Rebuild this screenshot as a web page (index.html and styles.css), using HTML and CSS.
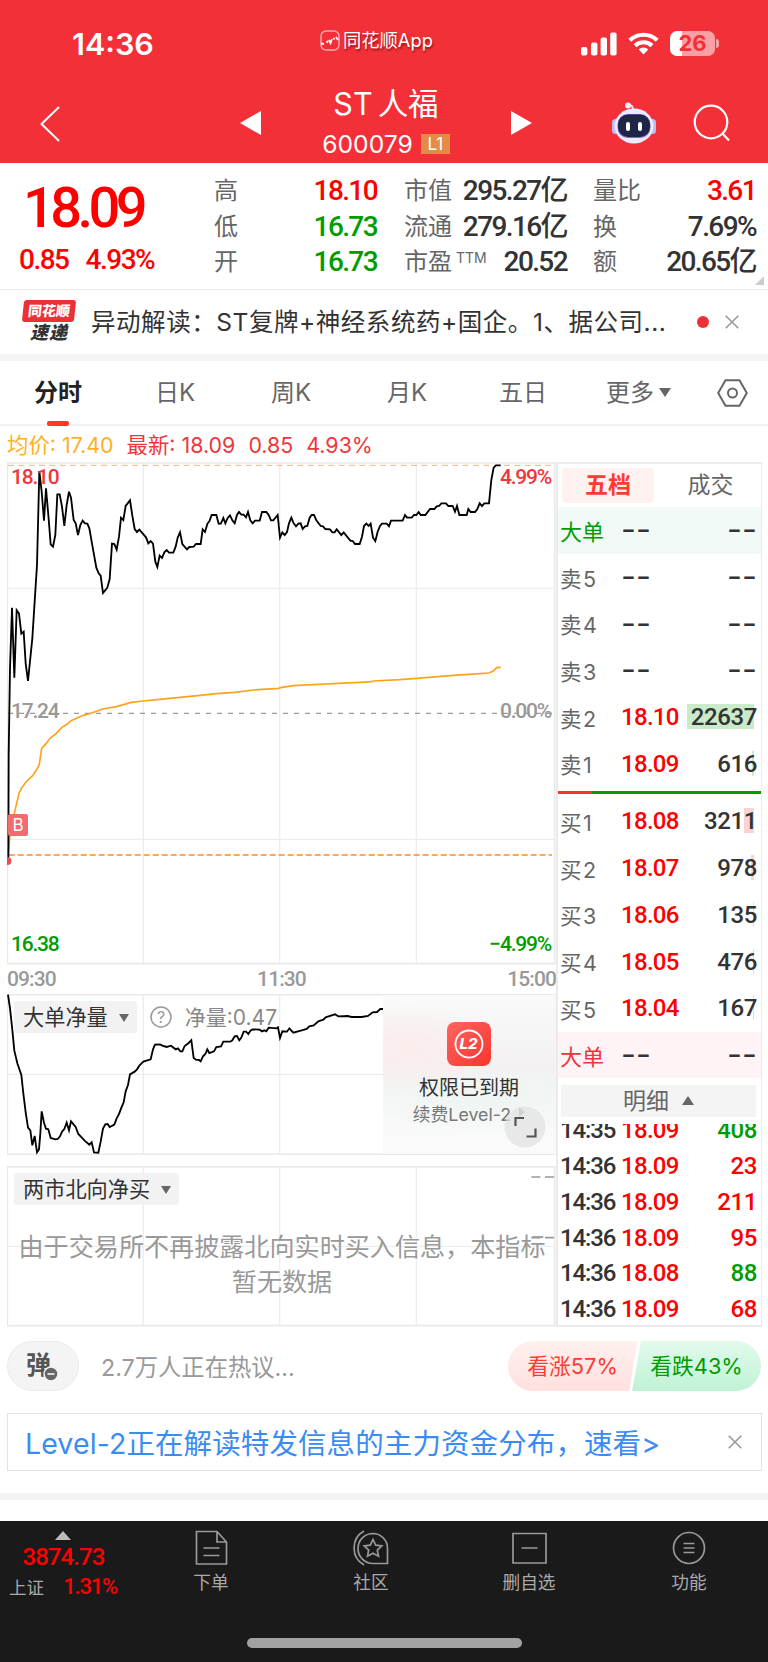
FILE: index.html
```html
<!DOCTYPE html>
<html lang="zh-CN">
<head>
  <meta charset="UTF-8" />
  <meta name="viewport" content="width=device-width, initial-scale=1.0"/>
  <title>ST人福 600079</title>
  <link rel="stylesheet" href="styles.css">
</head>
<body>

  <header>
    <div class="status">
      <span class="time">14:36</span>
      <span class="brand">
        <svg width="20" height="21" viewBox="0 0 20 21"><rect x="1" y="1" width="18" height="19" rx="5" fill="none" stroke="#fff" stroke-opacity=".6" stroke-width="1.4"/><path d="M1 13.500l3 .5M6.500 12.500l1.500-1.500M9 10l1.500 3 1.500-4M13.500 9.500l1-1.500M16 7l2 3" fill="none" stroke="#fff" stroke-width="1.800"/></svg>
        同花顺App
      </span>
      <span class="signals">
        <svg width="37" height="24" viewBox="0 0 37 24" fill="#fff"><rect x="0" y="15" width="6.4" height="8.5" rx="2"/><rect x="10" y="10.5" width="6.4" height="13" rx="2"/><rect x="19.6" y="5.5" width="6.4" height="18" rx="2"/><rect x="29.2" y="0.5" width="6.4" height="23" rx="2"/></svg>
        <svg class="wifi" width="31" height="23" viewBox="0 0 31 23" fill="none" stroke="#fff" stroke-width="4.2"><path d="M1.8 8.2a20 20 0 0 1 27.4 0"/><path d="M7 13.6a12.4 12.4 0 0 1 17 0"/><path d="M15.5 22.5l-4.8-5a6.8 6.8 0 0 1 9.6 0z" fill="#fff" stroke="none"/></svg>
        <span class="battery">26</span>
      </span>
    </div>
    <div class="titlebar">
      <svg class="back" width="20" height="36" viewBox="0 0 20 36"><path d="M19 1L1.5 18 19 35" fill="none" stroke="#fff" stroke-width="2"/></svg>
      <svg class="prev" width="21" height="24" viewBox="0 0 21 24"><path d="M21 0v24L0 12z" fill="#fff"/></svg>
      <div class="stock">
        <h1><span>ST</span>人福</h1>
        <p>600079<span class="lv">L1</span></p>
      </div>
      <svg class="next" width="21" height="24" viewBox="0 0 21 24"><path d="M0 0l21 12L0 24z" fill="#fff"/></svg>
      <svg class="robot" width="46" height="42" viewBox="0 0 46 42">
        <path d="M22 8q0-5-4-5" fill="none" stroke="#f3dfe8" stroke-width="2"/>
        <circle cx="17" cy="3.5" r="3" fill="#f4ecf4"/>
        <rect x="1" y="17" width="7" height="15" rx="3.5" fill="#b9bdf0"/><rect x="38" y="17" width="7" height="15" rx="3.5" fill="#b9bdf0"/>
        <ellipse cx="23" cy="24" rx="19.5" ry="17.5" fill="#e9edfb"/>
        <rect x="6.500" y="12" width="33" height="24" rx="10.500" fill="#8a5fe0"/>
        <rect x="7" y="12.500" width="32" height="22.500" rx="10" fill="#1e2648"/>
        <rect x="15" y="20" width="4" height="9" rx="2" fill="#fff"/><rect x="27" y="20" width="4" height="9" rx="2" fill="#fff"/>
      </svg>
      <svg class="search" width="38" height="38" viewBox="0 0 38 38" fill="none" stroke="#fff" stroke-width="2.200"><circle cx="18" cy="18" r="16.300"/><path d="M29.500 29.500l6.500 7"/></svg>
    </div>
  </header>

  <section class="quote">
    <div class="last">
      <div class="price num">18.09</div>
      <div class="chg num"><span>0.85</span><span>4.93%</span></div>
    </div>
    <dl class="c1">
      <dt>高</dt><dd class="up">18.10</dd>
      <dt>低</dt><dd class="down">16.73</dd>
      <dt>开</dt><dd class="down">16.73</dd>
    </dl>
    <dl class="c2">
      <dt>市值</dt><dd>295.27亿</dd>
      <dt>流通</dt><dd>279.16亿</dd>
      <dt>市盈<sup>TTM</sup></dt><dd>20.52</dd>
    </dl>
    <dl class="c3">
      <dt>量比</dt><dd class="up">3.61</dd>
      <dt>换</dt><dd>7.69%</dd>
      <dt>额</dt><dd>20.65亿</dd>
    </dl>
    <i class="corner"></i>
  </section>

  <section class="news">
    <div class="logo"><b>同花顺</b><em>速递</em></div>
    <p>异动解读：ST复牌+神经系统药+国企。1、据公司...</p>
    <i class="dot"></i>
    <svg class="close" width="14" height="14" viewBox="0 0 14 14"><path d="M.7.7l12.600 12.600M13.300.7L.7 13.300"/></svg>
  </section>

  <nav>
    <a class="on">分时</a>
    <a>日K</a>
    <a>周K</a>
    <a>月K</a>
    <a>五日</a>
    <a class="more">更多<i></i></a>
    <svg width="31" height="28" viewBox="0 0 31 28" fill="none" stroke="#666" stroke-width="2"><path d="M8.500 1.200h14L29.800 14l-7.300 12.800h-14L1.200 14z"/><circle cx="15.500" cy="14" r="4.500"/></svg>
  </nav>

  <div class="legend">
    <span class="avg">均价: 17.40</span><span>最新: 18.09</span><span>0.85</span><span>4.93%</span>
  </div>

  <main>
    <div class="charts">
      <div class="chart price-chart">
        <svg width="549" height="503" viewBox="21 21 1647 1509" fill="none">
          <g class="grid">
            <path d="M430 24v1503M839 24v1503M1249 24v1503M21 400h1644M21 1153h1644"/>
            <path class="frame" d="M22 24h1642v1502H22z"/>
          </g>
          <path d="M24 31H1656" stroke="#eab98a" stroke-width="3" stroke-dasharray="18 13"/>
          <path d="M24 775H1656" stroke="#999" stroke-width="3.500" stroke-dasharray="15 18"/>
          <path d="M26 1200H1656" stroke="#ff8a1f" stroke-width="5" stroke-dasharray="18 9"/>
          <polyline stroke="#ffa31a" stroke-width="5" points="25,1200 29,1150 33,1110 43,1075 50,1045 57,1015 64,1000 78,981 98,962 111,942 118,927 125,880 138,866 150,850 168,836 186,817 202,807 213,797 250,781 275,774 308,762 350,755 393,742 430,738 480,733 540,727 600,721 650,716 705,712 760,705 835,700 845,697 880,692 1000,686 1080,682 1115,680 1120,678 1200,674 1250,670 1360,661 1440,656 1467,654 1480,648 1490,638 1502,637"/>
          <polyline stroke="#000" stroke-width="5.500" points="25,1215 26,900 30,640 36,458 43,668 50,466 57,476 64,536 71,530 77,625 84,678 97,550 104,440 111,330 118,48 125,110 132,197 138,100 145,180 152,268 159,275 166,240 172,118 179,118 186,155 193,213 200,150 207,110 213,128 221,195 227,205 234,240 241,210 248,197 255,205 262,206 268,220 275,260 289,338 296,355 302,362 309,414 322,398 329,372 336,266 343,267 350,284 357,245 363,188 370,195 377,153 390,136 397,182 404,222 411,231 418,224 438,247 445,265 452,258 459,266 466,320 472,336 479,302 486,309 493,292 500,285 507,293 520,293 527,275 533,248 540,232 547,267 561,283 568,276 581,275 588,267 602,267 608,223 615,231 622,207 629,197 635,180 649,180 656,206 663,205 670,189 676,205 683,189 690,181 697,196 704,205 711,180 717,171 724,179 731,179 738,187 744,171 751,196 758,205 765,197 779,197 786,171 799,171 806,180 813,196 820,196 833,180 840,248 847,232 854,240 861,231 867,205 874,188 881,205 888,214 895,206 902,205 908,222 915,214 922,213 929,188 935,180 942,180 949,196 962,213 969,214 976,222 990,223 997,232 1004,232 1010,223 1024,240 1031,232 1051,257 1058,258 1065,267 1079,267 1086,245 1092,213 1099,206 1106,213 1112,206 1119,248 1126,258 1133,230 1140,213 1146,206 1160,206 1167,214 1173,197 1208,197 1215,180 1221,188 1235,188 1242,180 1249,180 1256,171 1262,180 1276,180 1290,162 1303,162 1310,154 1317,153 1324,145 1338,145 1345,153 1358,153 1365,170 1371,153 1378,180 1400,180 1405,162 1412,171 1425,171 1432,162 1439,145 1446,153 1453,145 1467,145 1474,75 1481,38 1488,31 1502,31"/>
          <path d="M22 1208a9 9 0 0 1 0 20z" fill="#f04a50" stroke="#f04a50" stroke-width="4"/>
        </svg>
        <span class="lab top l red">18.10</span>
        <span class="lab top r red">4.99%</span>
        <span class="lab mid l gray">17.24</span>
        <span class="lab mid r gray">0.00%</span>
        <span class="lab bot l green">16.38</span>
        <span class="lab bot r green">−4.99%</span>
        <span class="buy">B</span>
      </div>
      <div class="axis"><span>09:30</span><span>11:30</span><span>15:00</span></div>

      <div class="chart sub">
        <svg width="549" height="161" viewBox="21 402 1647 483" fill="none">
          <g class="grid">
            <path d="M430 403v480M839 403v480M1249 403v480M21 643h1644"/>
            <path class="frame" d="M22 404h1642v479H22z"/>
          </g>
          <polyline stroke="#000" stroke-width="5.500" points="24,404 30,445 36,500 43,572 52,610 64,645 70,700 77,757 84,803 91,811 97,856 104,828 111,877 117,868 121,820 125,754 132,788 138,806 145,808 152,834 166,838 173,837 180,829 186,815 193,807 200,788 207,811 213,784 227,801 235,822 254,842 268,854 275,847 282,877 295,878 302,845 309,806 316,793 323,792 329,801 343,794 350,775 357,762 363,746 371,727 377,694 384,675 390,643 404,635 411,628 418,617 430,605 452,598 459,568 465,554 480,553 487,557 500,561 513,557 527,568 534,565 541,574 547,574 554,558 566,549 574,541 581,594 588,599 597,600 602,604 609,589 616,582 622,568 628,579 642,574 649,561 663,559 670,545 691,545 697,541 704,529 711,528 718,541 724,533 731,515 738,515 745,522 752,511 758,508 779,509 786,514 793,511 799,514 806,503 830,505 834,502 840,534 847,514 861,515 868,505 880,518 905,511 920,507 928,499 941,496 955,484 970,479 977,472 1005,463 1015,469 1043,468 1055,471 1085,471 1104,468 1118,457 1131,456 1141,447 1149,447"/>
        </svg>
        <div class="tools">
          <span class="pick">大单净量<i></i></span>
          <svg width="22" height="22" viewBox="0 0 22 22"><circle cx="11" cy="11" r="10" fill="none" stroke="#999" stroke-width="1.500"/><text x="11" y="16.500" text-anchor="middle">?</text></svg>
          <span class="net">净量:0.47</span>
        </div>
        <div class="expired">
          <svg width="44" height="44" viewBox="0 0 44 44"><defs><linearGradient id="l2" x1="0" y1="0" x2="1" y2="1"><stop offset="0" stop-color="#ff6560"/><stop offset="1" stop-color="#f9342e"/></linearGradient></defs><rect width="44" height="44" rx="8" fill="url(#l2)"/><circle cx="22" cy="22" r="13.500" fill="none" stroke="#fff" stroke-width="1.800"/><text x="21.500" y="27.300" text-anchor="middle">L2</text></svg>
          <strong>权限已到期</strong>
          <p>续费Level-2<i></i></p>
        </div>
        <svg class="expand" width="42" height="42" viewBox="0 0 42 42"><circle cx="21" cy="21" r="20.500" fill="#dedede" fill-opacity=".65"/><path d="M11.500 20v-8h8.500M22.500 30.500h9v-8" fill="none" stroke="#555" stroke-width="2.200"/></svg>
      </div>

      <div class="chart sub north">
        <svg width="549" height="161" viewBox="21 0 1647 483" fill="none">
          <g class="grid">
            <path d="M430 2v478M839 2v478M1249 2v478M21 241h1644"/>
            <path class="frame" d="M22 2h1642v477H22z"/>
          </g>
          <path d="M1594 33h27M1635 33h27M1594 215h27M1635 215h27" stroke="#999" stroke-width="5"/>
        </svg>
        <div class="tools"><span class="pick">两市北向净买<i></i></span></div>
        <p class="empty">由于交易所不再披露北向实时买入信息，本指标暂无数据</p>
      </div>
    </div>

    <aside>
      <div class="switch"><b>五档</b><span>成交</span></div>
      <ul class="book">
        <li class="big sell"><span>大单</span><i>--</i><i>--</i></li>
        <li><span>卖5</span><i>--</i><i>--</i></li>
        <li><span>卖4</span><i>--</i><i>--</i></li>
        <li><span>卖3</span><i>--</i><i>--</i></li>
        <li><span>卖2</span><b>18.10</b><em class="vs" style="--w:67px">22637</em></li>
        <li><span>卖1</span><b>18.09</b><em class="vs" style="--w:2px">616</em></li>
      </ul>
      <div class="ratio"><i></i></div>
      <ul class="book buys">
        <li><span>买1</span><b>18.08</b><em class="vb" style="--w:10px">3211</em></li>
        <li><span>买2</span><b>18.07</b><em class="vb" style="--w:3px">978</em></li>
        <li><span>买3</span><b>18.06</b><em class="vb" style="--w:1px">135</em></li>
        <li><span>买4</span><b>18.05</b><em class="vb" style="--w:1px">476</em></li>
        <li><span>买5</span><b>18.04</b><em class="vb" style="--w:1px">167</em></li>
        <li class="big buy-in"><span>大单</span><i>--</i><i>--</i></li>
      </ul>
      <div class="detail">明细<i></i></div>
      <div class="ticks">
        <ul>
          <li><span>14:35</span><b>18.09</b><em class="down">408</em></li>
          <li><span>14:36</span><b>18.09</b><em>23</em></li>
          <li><span>14:36</span><b>18.09</b><em>211</em></li>
          <li><span>14:36</span><b>18.09</b><em>95</em></li>
          <li><span>14:36</span><b>18.08</b><em class="down">88</em></li>
          <li><span>14:36</span><b>18.09</b><em>68</em></li>
        </ul>
      </div>
    </aside>
  </main>

  <section class="talk">
    <div class="danmu">弹<svg width="16" height="16" viewBox="0 0 16 16"><circle cx="8" cy="8" r="7" fill="#666" stroke="#f3f3f3" stroke-width="1.500"/><path d="M4.500 8h7" stroke="#fff" stroke-width="1.500"/></svg></div>
    <p>2.7万人正在热议...</p>
    <div class="vote rise">看涨57%</div>
    <div class="vote fall">看跌43%</div>
  </section>

  <section class="banner">
    <p>Level-2正在解读特发信息的主力资金分布，速看&gt;</p>
    <svg class="close" width="14" height="14" viewBox="0 0 14 14"><path d="M.7.7l12.600 12.600M13.300.7L.7 13.300"/></svg>
  </section>
  <div class="strip"></div>

  <footer>
    <div class="index">
      <i></i>
      <b>3874.73</b>
      <p><span>上证</span><em>1.31%</em></p>
    </div>
    <div class="tabs">
      <a>
        <svg width="38" height="36" viewBox="0 0 38 36"><path d="M4.500 1.500h20.500l9.500 10.500v22h-30zM25 1.500V12h9.500M11.500 18h16M11.500 25.500h16"/></svg>
        下单
      </a>
      <a>
        <svg width="38" height="36" viewBox="0 0 38 36"><path d="M21 3.500A14.700 14.700 0 0 0 21 33.500h14.500V18.500A14.700 14.700 0 0 0 21 3.500zM12 1A19.500 19.500 0 0 0 12 35"/><path d="M21 9.500l2.700 5.600 6.100.8-4.500 4.200 1.200 6.100-5.500-3-5.500 3 1.200-6.100-4.500-4.200 6.100-.8z"/></svg>
        社区
      </a>
      <a>
        <svg width="38" height="36" viewBox="0 0 38 36"><path d="M3 3.500h33v29.500h-33zM11.500 18h16"/></svg>
        删自选
      </a>
      <a>
        <svg width="38" height="36" viewBox="0 0 38 36"><circle cx="19" cy="18" r="15.500"/><path d="M13.500 13.500h11M13.500 18h11M13.500 22.500h11"/></svg>
        功能
      </a>
    </div>
    <div class="home"></div>
  </footer>

</body>
</html>
```

FILE: styles.css
```css
* { box-sizing: border-box; margin: 0; padding: 0; }

body {
  width: 768px;
  font-family: Inter, 'Noto Sans CJK SC', sans-serif;
  background-color: #fff;
  color: #333;
}

svg { display: block; flex: none; }
ul { list-style: none; }
i, em { font-style: normal; }

.up { color: #f00 !important; }
.down { color: #009c00 !important; }

/* 顶部 */
header {
  height: 163px;
  background-color: #f33038;
  color: #fff;
}

.status {
  height: 84px;
  padding-top: 30px;
  display: grid;
  grid-template-columns: 320px 1fr 187px;
}

.time {
  padding-left: 72px;
  font-size: 30.5px;
  font-weight: 600;
  line-height: 28px;
}

.brand {
  display: flex;
  gap: 3px;
  height: 20px;
  font-size: 18.3px;
  line-height: 21px;
  white-space: nowrap;
  text-shadow: 1px 2px 2px rgba(90, 0, 0, .6);
}

.signals {
  display: flex;
  padding-top: 2px;
}

.wifi { margin-left: 10px; }

.battery {
  position: relative;
  width: 45px;
  height: 25px;
  margin: -1px 0 0 11px;
  border-radius: 7px;
  background: linear-gradient(90deg, #fff 12px, #f9a0a4 12px);
  color: #f33038;
  font-size: 22px;
  font-weight: 700;
  line-height: 25px;
  text-align: center;
}

.battery::after {
  content: "";
  position: absolute;
  right: -4px;
  top: 8px;
  width: 3px;
  height: 9px;
  border-radius: 0 3px 3px 0;
  background-color: #f9a0a4;
}

.titlebar {
  display: flex;
  align-items: flex-start;
}

.back { margin: 22px 0 0 40px; }
.prev { margin: 27px 0 0 180px; }

.stock {
  width: 250px;
  text-align: center;
}

.stock h1 {
  margin-top: 1px;
  font-size: 30.5px;
  font-weight: 400;
  line-height: 38px;
}

.stock h1 span { margin-right: 5px; }

.stock p {
  display: flex;
  justify-content: center;
  align-items: center;
  gap: 8px;
  height: 42px;
  font-size: 24.7px;
}

.lv {
  width: 29px;
  height: 20px;
  background-color: #e38c47;
  font-size: 17px;
  line-height: 20px;
}

.next { margin-top: 27px; }
.robot { margin: 18px 0 0 79px; }
.search { margin: 20px 0 0 36px; }

/* 行情 */
.num, dd, .lab, .axis, .book b, .book em, .ticks, .index b, .index em {
  font-family: Roboto, 'Noto Sans CJK SC', sans-serif;
  font-weight: 500;
}

.quote {
  position: relative;
  display: flex;
  height: 127px;
  padding-top: 10px;
  border-bottom: 1px solid #ececec;
}

.last {
  width: 214px;
  color: #f00;
}

.price {
  padding-left: 23px;
  font-size: 56px;
  line-height: 70px;
  letter-spacing: -4.6px;
}

.chg {
  display: flex;
  gap: 17px;
  padding-left: 19px;
  font-size: 28px;
  line-height: 34px;
  letter-spacing: -1.5px;
}

dl {
  display: grid;
  grid-template-columns: 48px 1fr;
  grid-auto-rows: 35.5px;
  line-height: 35.5px;
  white-space: nowrap;
}

dt { font-size: 24px; color: #666; }

dt sup {
  margin-left: 4px;
  font-size: 14px;
  line-height: 0;
  vertical-align: 7px;
}

dd {
  font-size: 28px;
  letter-spacing: -1.6px;
  text-align: right;
}

.c1 { width: 163px; }
.c2 { width: 163px; margin-left: 27px; }
.c3 { width: 163px; margin-left: 26px; }

.corner {
  position: absolute;
  right: 4px;
  bottom: 4px;
  border-left: 9px solid transparent;
  border-bottom: 9px solid #ccc;
}

.news {
  display: flex;
  align-items: center;
  height: 71px;
  padding-left: 23px;
  border-bottom: 7px solid #f4f4f4;
}

.logo {
  width: 52px;
  margin-right: 16px;
  text-align: center;
  font-weight: 900;
  line-height: 21px;
}

.logo b {
  display: block;
  transform: skewX(-6deg);
  border-radius: 3px;
  background-color: #ec3036;
  color: #fff;
  font-size: 14px;
  font-weight: 900;
  line-height: 22px;
}

.logo em {
  font-size: 18px;
  font-style: italic;
  letter-spacing: 1px;
}

.news p {
  width: 606px;
  margin-top: -4px;
  font-size: 24.5px;
  letter-spacing: .55px;
  white-space: nowrap;
}

.dot {
  width: 12px;
  height: 12px;
  border-radius: 50%;
  background-color: #ec3036;
}

.close {
  margin-left: 16px;
  stroke: #999;
  stroke-width: 1.6;
}

/* 周期 */
nav {
  display: flex;
  align-items: center;
  height: 65px;
  padding-left: 34px;
  border-bottom: 2px solid #f2f2f2;
  font-size: 24px;
  color: #666;
}

nav a {
  position: relative;
  width: 116px;
  line-height: 64px;
}

nav .on {
  width: 121px;
  color: #222;
  font-weight: 700;
}

nav .on::after {
  content: "";
  position: absolute;
  left: 13px;
  bottom: -1px;
  width: 22px;
  height: 5px;
  border-radius: 2px;
  background-color: #ff382f;
}

nav a:nth-child(4) { width: 112px; }
nav a:nth-child(5) { width: 107px; }
nav .more { width: 111px; }

.more i, .pick i, .detail i, .index i {
  display: inline-block;
  border: 6px solid transparent;
  border-bottom: 0;
  border-top: 9px solid #666;
}

.more i { margin-left: 5px; vertical-align: 4px; }

.legend {
  display: flex;
  gap: 13px;
  height: 36px;
  padding-left: 7px;
  font-size: 21.4px;
  line-height: 38px;
  color: #f0363b;
}

.avg { color: #ffb01f; }

/* 图表 */
main {
  display: flex;
  height: 865px;
  margin-left: 7px;
}

.charts { width: 549px; }
.chart { position: relative; }
.grid { stroke: #ededed; stroke-width: 4; }
.frame { stroke: #e9e9e9; stroke-width: 5; }

.lab {
  position: absolute;
  font-size: 21px;
  line-height: 20px;
  letter-spacing: -1.2px;
}

.l { left: 4px; }
.r { right: 5px; }
.top { top: 5px; }
.mid { top: 239px; }
.bot { top: 472px; }
.red { color: #f0363b; }
.gray { color: #999; }
.green { color: #009c00; }

.buy {
  position: absolute;
  left: 1px;
  top: 352px;
  width: 20px;
  height: 22px;
  border-radius: 2px;
  background-color: #f46b6f;
  color: #fff;
  font-size: 17px;
  line-height: 22px;
  text-align: center;
}

.axis {
  display: flex;
  justify-content: space-between;
  height: 29px;
  font-size: 21px;
  line-height: 28px;
  letter-spacing: -.9px;
  color: #999;
}

.sub { height: 161px; }
.north { margin-top: 11px; }

.tools {
  position: absolute;
  left: 7px;
  top: 7px;
  display: flex;
  align-items: center;
}

.tools text { font-size: 16px; fill: #999; }

.pick {
  padding: 0 8px 0 9px;
  margin-right: 13px;
  border-radius: 3px;
  background-color: #f2f2f2;
  font-size: 21.2px;
  line-height: 32px;
}

.pick i {
  margin-left: 11px;
  border-width: 8px 5px 0;
  vertical-align: 3px;
}

.net {
  margin: -2px 0 0 13px;
  font-size: 21px;
  color: #888;
}

.expired {
  position: absolute;
  left: 376px;
  top: 1px;
  width: 172px;
  height: 159px;
  padding-top: 27px;
  display: flex;
  flex-direction: column;
  align-items: center;
  background:
    radial-gradient(ellipse 95px 45px at 15% 34%, #fbecec, transparent),
    radial-gradient(ellipse 120px 35px at 60% 65%, #eef5f2, transparent),
    linear-gradient(#fafafa, #f3f1f1 45%, #f5f7f6 65%, #fafafa 90%);
}

.expired text { fill: #fff; font-size: 15px; font-weight: 800; font-style: italic; }
.expired strong { margin-top: 7px; font-size: 20px; font-weight: 400; line-height: 30px; }

.expired p {
  font-size: 17.8px;
  line-height: 24px;
  color: #777;
  white-space: nowrap;
}

.expired p i {
  display: inline-block;
  margin-left: 8px;
  border: 5px solid transparent;
  border-left: 6px solid #bbb;
  border-right: 0;
  vertical-align: 4px;
}

.expand {
  position: absolute;
  right: 10px;
  bottom: 7px;
}

.empty {
  position: absolute;
  left: 10px;
  top: 64px;
  width: 530px;
  font-size: 25.1px;
  line-height: 35px;
  color: #999;
  text-align: center;
}

/* 盘口 */
aside {
  width: 206px;
  border: solid #ebebeb;
  border-width: 2px 1px 2px 2px;
}

.switch {
  display: grid;
  grid-template-columns: 92px 1fr;
  gap: 6px;
  height: 43px;
  padding: 4px 0 5px 4px;
  font-size: 23px;
  line-height: 35px;
  text-align: center;
  color: #666;
}

.switch b {
  border-radius: 4px;
  background-color: #fff1f0;
  color: #ff3a30;
}

.book li {
  display: grid;
  grid-template-columns: 61px 1fr auto;
  align-items: center;
  height: 46.7px;
  padding: 0 4px 0 2px;
}

.book span {
  font-size: 21.5px;
  letter-spacing: 1.5px;
  color: #666;
}

.book b {
  font-size: 24px;
  letter-spacing: -.7px;
  color: #f00;
}

.book i {
  font-size: 32.5px;
  font-weight: 400;
  line-height: 30px;
}

.book em {
  position: relative;
  z-index: 0;
  font-size: 24px;
  line-height: 26px;
  letter-spacing: -.4px;
}

.book em::before {
  content: "";
  position: absolute;
  z-index: -1;
  right: 3px;
  top: 0;
  width: var(--w);
  height: 25px;
}

.vs::before { background-color: #c9ebca; }
.vb::before { background-color: #fbd3d3; }

.book .big span { font-size: 22px; letter-spacing: 0; }
.sell { background-color: #f1faf6; }
.sell span { color: #009c00; }
.buy-in { background-color: #fff4f5; }
.buy-in span { color: #ee3439; }

.ratio {
  height: 3px;
  margin-top: 4px;
  background-color: #009c00;
}

.ratio i {
  display: block;
  width: 34px;
  height: 3px;
  background-color: #f0363b;
}

.buys { margin-top: 4px; }

.detail {
  height: 32px;
  margin: 7px 5px 7px 3px;
  background-color: #f4f4f4;
  font-size: 23px;
  line-height: 32px;
  text-align: center;
  color: #666;
}

.detail i {
  margin-left: 13px;
  border: 6px solid transparent;
  border-top: 0;
  border-bottom: 9px solid #666;
  vertical-align: 4px;
}

/* 成交明细从底部对齐，上面超出的部分裁掉 */
.ticks {
  display: flex;
  align-items: flex-end;
  height: 201px;
  overflow: hidden;
}

.ticks ul { width: 100%; }

.ticks li {
  display: grid;
  grid-template-columns: 61px 1fr auto;
  height: 35.9px;
  padding: 0 4px 0 2px;
  font-size: 24px;
  line-height: 41px;
}

.ticks span { letter-spacing: -1.1px; }
.ticks b { font-weight: 500; letter-spacing: -.7px; color: #f00; }
.ticks em { letter-spacing: -.4px; color: #f00; }

/* 热议 */
.talk {
  display: flex;
  align-items: center;
  height: 50px;
  margin: 14px 7px 0;
}

.danmu {
  position: relative;
  width: 72px;
  height: 50px;
  padding-left: 18px;
  border: 1px solid #ebebeb;
  border-radius: 25px;
  background-color: #f4f4f4;
  color: #555;
  font-size: 25px;
  font-weight: 700;
  line-height: 46px;
}

.danmu svg {
  position: absolute;
  left: 35px;
  top: 24px;
}

.talk p {
  width: 406px;
  padding-left: 22px;
  margin-right: 23px;
  font-size: 23.3px;
  color: #999;
}

.vote {
  width: 129px;
  height: 50px;
  font-size: 21.8px;
  line-height: 51px;
  text-align: center;
}

.rise {
  border-radius: 25px 0 0 25px;
  clip-path: polygon(0 0, 100% 0, 94% 100%, 0 100%);
  background: linear-gradient(#fff0ef, #ffe0de);
  color: #ff3b30;
}

.fall {
  margin-left: -5px;
  border-radius: 0 25px 25px 0;
  clip-path: polygon(7% 0, 100% 0, 100% 100%, 0 100%);
  background: linear-gradient(#e2faec, #c0f2d5);
  color: #009c00;
}

.banner {
  display: flex;
  align-items: center;
  height: 58px;
  margin: 22px 6px 22px 7px;
  padding-left: 17px;
  border: 1px solid #e2e2e2;
  font-size: 28.5px;
  color: #3b8cf2;
}

.banner p {
  width: 687px;
  margin-top: -2px;
  letter-spacing: .1px;
  white-space: nowrap;
}

.strip {
  height: 7px;
  background-color: #f4f4f4;
}

/* 底部 */
footer {
  display: grid;
  grid-template-columns: 130px 1fr;
  grid-template-rows: 117px 24px;
  margin-top: 21px;
  background-color: #1a1a1a;
  color: #aaa;
}

.index {
  padding-top: 10px;
  text-align: center;
}

.index i {
  display: block;
  width: 0;
  margin: 0 0 0 55px;
  border: 8px solid transparent;
  border-top: 0;
  border-bottom: 9px solid #bbb;
}

.index b {
  display: block;
  padding-right: 3px;
  font-size: 24px;
  line-height: 34px;
  letter-spacing: -.9px;
  color: #f00;
}

.index p {
  display: flex;
  justify-content: space-between;
  padding: 0 13px 0 9px;
  font-size: 17.5px;
  line-height: 27px;
}

.index em {
  font-size: 22px;
  line-height: 25px;
  letter-spacing: -1.2px;
  color: #f00;
}

.tabs {
  display: grid;
  grid-template-columns: 162px 158px 158px 162px;
}

.tabs a {
  display: flex;
  flex-direction: column;
  align-items: center;
  padding-top: 9px;
  font-size: 17.7px;
  line-height: 33px;
}

.tabs svg { fill: none; stroke: #999; stroke-width: 1.7; }

.home {
  grid-column: 1 / 3;
  width: 275px;
  height: 10px;
  margin-left: 247px;
  border-radius: 5px;
  background-color: #a2a2a2;
}
```
